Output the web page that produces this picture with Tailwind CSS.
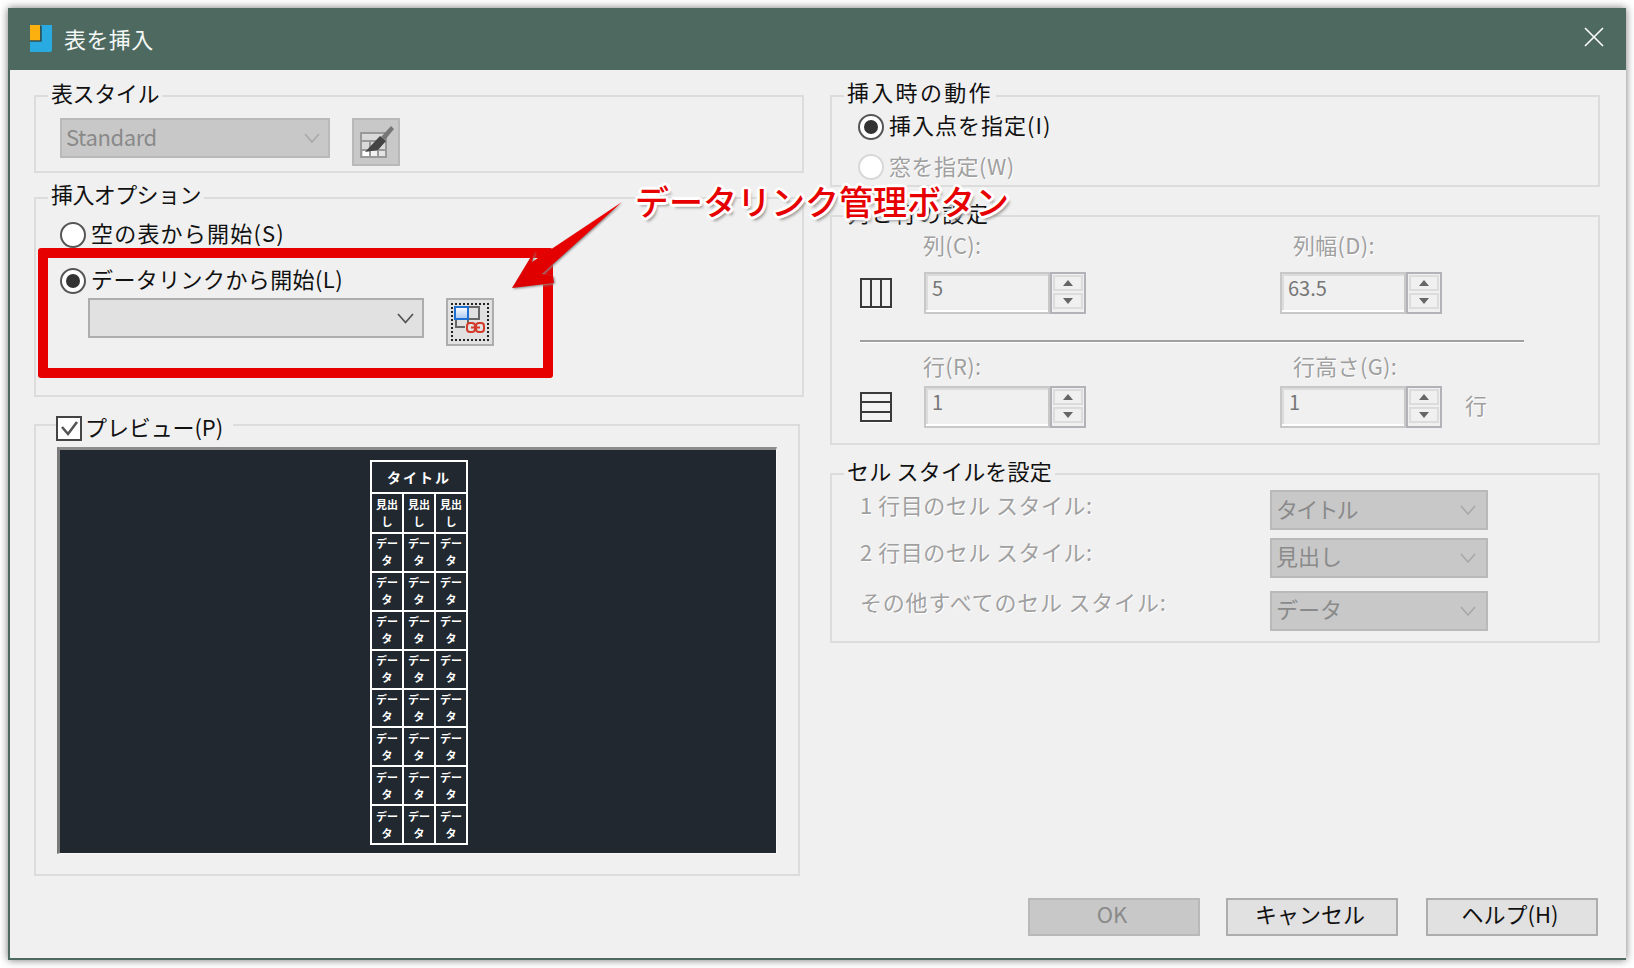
<!DOCTYPE html>
<html lang="ja">
<head>
<meta charset="utf-8">
<title>表を挿入</title>
<script src="https://cdn.jsdelivr.net/npm/@tailwindcss/browser@4"></script>
</head>
<body class="bg-white font-['Noto_Sans_CJK_JP','Liberation_Sans',sans-serif] text-[22px] leading-[28px] text-[#111]">
<div class="w-[1634px] h-[968px] pt-[8px] pl-[8px] overflow-hidden">
  <div class="relative w-[1618px] h-[952px] bg-[#f0f0f0] border-l-2 border-b-2 border-[#4d6960] shadow-[0_0_8px_rgba(0,0,0,0.55)]">

    <!-- title bar -->
    <div class="h-[62px] -ml-[2px] bg-[#4d6960] flex items-center pl-[22px] pr-[22px] text-[#f4f8f6]">
      <svg class="w-[22px] h-[27px] -mt-[2px]" viewBox="0 0 22 27">
        <path d="M11 0h11v25a2 2 0 0 1-2 2H0V16h11z" fill="#29abe2"/>
        <rect x="0" y="0" width="10" height="16" fill="#fbb010"/>
        <path d="M0 16h11V1" fill="none" stroke="#2c4f55" stroke-width="1.5"/>
      </svg>
      <span class="ml-[12px] -mt-[2px] tracking-[0.4px]">表を挿入</span>
      <svg class="ml-auto w-[20px] h-[20px] -mt-[4px]" viewBox="0 0 20 20"><path d="M1 1l18 18M19 1L1 19" stroke="#fff" stroke-width="1.6" fill="none"/></svg>
    </div>

    <div class="flex pl-[24px]">
      <!-- left column -->
      <div class="w-[770px] pt-[25px]">
        <section class="h-[78px] border-2 border-[#dcdcdc]">
          <div class="-mt-[19px] ml-[12px] w-fit px-[3px] bg-[#f0f0f0] tracking-[-0.4px]">表スタイル</div>
          <div class="flex mt-[12px] ml-[24px]">
            <div class="w-[270px] h-[40px] bg-[#c8c8c8] border-2 border-[#b9b9b9] flex items-center pl-[4px] pr-[8px] text-[#8a8a8a] tracking-[-0.4px]">
              <span class="-mt-[4px]">Standard</span>
              <svg class="ml-auto w-[16px] h-[10px]" viewBox="0 0 16 10"><path d="M1 1l7 8 7-8" fill="none" stroke="#a8a8a8" stroke-width="1.6"/></svg>
            </div>
            <div class="ml-[22px] w-[48px] h-[48px] bg-[#c8c8c8] border-2 border-[#b9b9b9]">
              <svg class="w-[44px] h-[44px]" viewBox="0 0 44 44">
                <rect x="7" y="13" width="25" height="24" fill="#d9d9d9" stroke="#999" stroke-width="2"/>
                <path d="M8 30h23M16 22v14M24 22v14M8 21h23" stroke="#999" stroke-width="2"/>
                <rect x="9" y="31" width="6" height="5" fill="#fff"/><rect x="17" y="31" width="6" height="5" fill="#f0f0f0"/><rect x="25" y="31" width="6" height="5" fill="#e4e4e4"/>
                <path d="M37 6l3 3-9 11-4-3z" fill="#777"/>
                <path d="M26 16l6 5-8 9-13 2z" fill="#444"/>
              </svg>
            </div>
          </div>
        </section>

        <section class="mt-[24px] h-[200px] border-2 border-[#dcdcdc]">
          <div class="-mt-[20px] ml-[12px] w-fit px-[3px] bg-[#f0f0f0] tracking-[-0.6px]">挿入オプション</div>
          <div class="flex items-center mt-[15px] ml-[24px] h-[26px]">
            <span class="w-[26px] h-[26px] rounded-full bg-white border-2 border-[#555]"></span>
            <span class="ml-[5px] -mt-[6px] tracking-[1.2px]">空の表から開始(S)</span>
          </div>
          <div class="flex items-center mt-[20px] ml-[24px] h-[26px]">
            <span class="w-[26px] h-[26px] rounded-full bg-white border-2 border-[#555] flex items-center justify-center"><span class="w-[14px] h-[14px] rounded-full bg-[#333]"></span></span>
            <span class="ml-[5px] -mt-[6px] tracking-[0.4px]">データリンクから開始(L)</span>
          </div>
          <div class="flex mt-[4px] ml-[52px]">
            <div class="w-[336px] h-[40px] bg-[#e1e1e1] border-2 border-[#adadad] flex items-center justify-end pr-[8px]">
              <svg class="w-[17px] h-[11px]" viewBox="0 0 17 11"><path d="M1 1l7.500 8.500L16 1" fill="none" stroke="#555" stroke-width="1.8"/></svg>
            </div>
            <div class="ml-[22px] w-[48px] h-[48px] bg-[#e1e1e1] border-2 border-[#adadad] p-[3px]">
              <div class="w-full h-full border-2 border-dotted border-[#222]">
                <svg class="w-[34px] h-[34px]" viewBox="0 0 34 34">
                  <defs><linearGradient id="cell" x1="0" y1="0" x2="0" y2="1"><stop offset="0" stop-color="#fff"/><stop offset="1" stop-color="#a9c8f0"/></linearGradient></defs>
                  <path d="M15 2h11v12H15M3 14v8h9M15 14v4" fill="none" stroke="#666" stroke-width="2"/>
                  <rect x="2" y="2" width="13" height="12" fill="url(#cell)" stroke="#1f6fd0" stroke-width="2"/>
                  <rect x="14" y="18" width="8" height="9" rx="3" fill="none" stroke="#d23a2a" stroke-width="2"/>
                  <rect x="23" y="18" width="8" height="9" rx="3" fill="none" stroke="#d23a2a" stroke-width="2"/>
                  <path d="M18 22.500h9" stroke="#d23a2a" stroke-width="2"/>
                </svg>
              </div>
            </div>
          </div>
        </section>

        <section class="mt-[27px] w-[766px] h-[452px] border-2 border-[#dcdcdc]">
          <div class="-mt-[12px] ml-[20px] w-fit h-[28px] pr-[10px] bg-[#f0f0f0] flex items-center">
            <svg class="w-[26px] h-[25px]" viewBox="0 0 26 25"><rect x="1" y="1" width="24" height="23" fill="#fff" stroke="#444" stroke-width="2"/><path d="M6 11l6 7 9-12" fill="none" stroke="#555" stroke-width="2.600"/></svg>
            <span class="ml-[3px] -mt-[4px] tracking-[-0.1px]">プレビュー(P)</span>
          </div>
          <div class="mt-[5px] ml-[21px] w-[720px] h-[407px] bg-[#212830] border-t-[3px] border-l-[3px] border-t-[#8c8c8c] border-l-[#7a7a7a] border-b border-r border-b-[#fafafa] border-r-[#fafafa] pt-[10px] pl-[310px] text-white">
            <table class="w-[98px] h-[385px] border-collapse table-fixed text-center text-[11px] leading-[17px] font-bold">
              <tr class="h-[32px]"><td colspan="3" class="border-2 border-white text-[14px] tracking-[2px]">タイトル</td></tr>
              <tr class="h-[40px]"><td class="border-2 border-white">見出<br>し</td><td class="border-2 border-white">見出<br>し</td><td class="border-2 border-white">見出<br>し</td></tr>
              <tr><td class="border-2 border-white">デー<br>タ</td><td class="border-2 border-white">デー<br>タ</td><td class="border-2 border-white">デー<br>タ</td></tr>
              <tr><td class="border-2 border-white">デー<br>タ</td><td class="border-2 border-white">デー<br>タ</td><td class="border-2 border-white">デー<br>タ</td></tr>
              <tr><td class="border-2 border-white">デー<br>タ</td><td class="border-2 border-white">デー<br>タ</td><td class="border-2 border-white">デー<br>タ</td></tr>
              <tr><td class="border-2 border-white">デー<br>タ</td><td class="border-2 border-white">デー<br>タ</td><td class="border-2 border-white">デー<br>タ</td></tr>
              <tr><td class="border-2 border-white">デー<br>タ</td><td class="border-2 border-white">デー<br>タ</td><td class="border-2 border-white">デー<br>タ</td></tr>
              <tr><td class="border-2 border-white">デー<br>タ</td><td class="border-2 border-white">デー<br>タ</td><td class="border-2 border-white">デー<br>タ</td></tr>
              <tr><td class="border-2 border-white">デー<br>タ</td><td class="border-2 border-white">デー<br>タ</td><td class="border-2 border-white">デー<br>タ</td></tr>
              <tr><td class="border-2 border-white">デー<br>タ</td><td class="border-2 border-white">デー<br>タ</td><td class="border-2 border-white">デー<br>タ</td></tr>
            </table>
          </div>
        </section>
      </div>

      <!-- right column -->
      <div class="ml-[26px] w-[770px] pt-[25px]">
        <section class="h-[92px] border-2 border-[#dcdcdc]">
          <div class="-mt-[20px] ml-[12px] w-fit px-[3px] bg-[#f0f0f0] tracking-[2.3px]">挿入時の動作</div>
          <div class="flex items-center mt-[9px] ml-[26px] h-[26px]">
            <span class="w-[26px] h-[26px] rounded-full bg-white border-2 border-[#555] flex items-center justify-center"><span class="w-[14px] h-[14px] rounded-full bg-[#333]"></span></span>
            <span class="ml-[5px] -mt-[6px] tracking-[1px]">挿入点を指定(I)</span>
          </div>
          <div class="flex items-center mt-[14px] ml-[26px] h-[26px]">
            <span class="w-[26px] h-[26px] rounded-full bg-white border-2 border-[#d8d8d8]"></span>
            <span class="ml-[5px] -mt-[4px] tracking-[0.5px] text-[#a0a0a0] [text-shadow:1px_1px_0_#fff]">窓を指定(W)</span>
          </div>
        </section>

        <section class="mt-[28px] h-[230px] border-2 border-[#dcdcdc]">
          <div class="-mt-[19px] ml-[12px] w-fit px-[3px] bg-[#f0f0f0] tracking-[1.8px]">列と行の設定</div>
          <div class="flex mt-[4px] pl-[91px] text-[#a0a0a0] [text-shadow:1px_1px_0_#fff] tracking-[0.3px]">
            <span class="w-[370px]">列(C):</span><span>列幅(D):</span>
          </div>
          <div class="flex items-center mt-[14px] pl-[28px]">
            <svg class="w-[32px] h-[31px]" viewBox="0 0 32 31"><rect x="1" y="1" width="30" height="28" fill="#f3f3f3" stroke="#3a3a3a" stroke-width="2"/><path d="M11 1v28M21 1v28" stroke="#3a3a3a" stroke-width="2"/><path d="M0 30.500h32" stroke="#fff"/></svg>
            <div class="ml-[32px] w-[162px] h-[42px] flex">
              <div class="w-[126px] border-2 border-[#c8c8c8] shadow-[inset_0_-2px_0_#fff,inset_2px_2px_0_#dcdcdc] pl-[6px] text-[#777] text-[20px] leading-[28px]">5</div>
              <div class="w-[36px] border-2 border-[#b2b2b8] p-[1px] flex flex-col gap-[2px]">
                <span class="h-[16px] border-2 border-[#dcdcdc] flex items-center justify-center"><svg class="w-[10px] h-[6px]" viewBox="0 0 10 6"><path d="M5 0l5 6H0z" fill="#666"/></svg></span>
                <span class="h-[16px] border-2 border-[#dcdcdc] flex items-center justify-center"><svg class="w-[10px] h-[6px]" viewBox="0 0 10 6"><path d="M5 6l5-6H0z" fill="#666"/></svg></span>
              </div>
            </div>
            <div class="ml-[194px] w-[162px] h-[42px] flex">
              <div class="w-[126px] border-2 border-[#c8c8c8] shadow-[inset_0_-2px_0_#fff,inset_2px_2px_0_#dcdcdc] pl-[6px] text-[#777] text-[20px] leading-[28px]">63.5</div>
              <div class="w-[36px] border-2 border-[#b2b2b8] p-[1px] flex flex-col gap-[2px]">
                <span class="h-[16px] border-2 border-[#dcdcdc] flex items-center justify-center"><svg class="w-[10px] h-[6px]" viewBox="0 0 10 6"><path d="M5 0l5 6H0z" fill="#666"/></svg></span>
                <span class="h-[16px] border-2 border-[#dcdcdc] flex items-center justify-center"><svg class="w-[10px] h-[6px]" viewBox="0 0 10 6"><path d="M5 6l5-6H0z" fill="#666"/></svg></span>
              </div>
            </div>
          </div>
          <div class="mt-[26px] ml-[28px] w-[664px] h-[3px] border-t-2 border-[#a0a0a0] bg-white"></div>
          <div class="flex mt-[8px] pl-[91px] text-[#a0a0a0] [text-shadow:1px_1px_0_#fff] tracking-[0.3px]">
            <span class="w-[370px]">行(R):</span><span>行高さ(G):</span>
          </div>
          <div class="flex items-center mt-[7px] pl-[28px]">
            <svg class="w-[32px] h-[31px]" viewBox="0 0 32 31"><rect x="1" y="1" width="30" height="28" fill="#f3f3f3" stroke="#3a3a3a" stroke-width="2"/><path d="M1 10h30M1 20h30" stroke="#3a3a3a" stroke-width="2"/><path d="M0 30.500h32" stroke="#fff"/></svg>
            <div class="ml-[32px] w-[162px] h-[42px] flex">
              <div class="w-[126px] border-2 border-[#c8c8c8] shadow-[inset_0_-2px_0_#fff,inset_2px_2px_0_#dcdcdc] pl-[6px] text-[#777] text-[20px] leading-[28px]">1</div>
              <div class="w-[36px] border-2 border-[#b2b2b8] p-[1px] flex flex-col gap-[2px]">
                <span class="h-[16px] border-2 border-[#dcdcdc] flex items-center justify-center"><svg class="w-[10px] h-[6px]" viewBox="0 0 10 6"><path d="M5 0l5 6H0z" fill="#666"/></svg></span>
                <span class="h-[16px] border-2 border-[#dcdcdc] flex items-center justify-center"><svg class="w-[10px] h-[6px]" viewBox="0 0 10 6"><path d="M5 6l5-6H0z" fill="#666"/></svg></span>
              </div>
            </div>
            <div class="ml-[194px] w-[162px] h-[42px] flex">
              <div class="w-[126px] border-2 border-[#c8c8c8] shadow-[inset_0_-2px_0_#fff,inset_2px_2px_0_#dcdcdc] pl-[7px] text-[#777] text-[20px] leading-[28px]">1</div>
              <div class="w-[36px] border-2 border-[#b2b2b8] p-[1px] flex flex-col gap-[2px]">
                <span class="h-[16px] border-2 border-[#dcdcdc] flex items-center justify-center"><svg class="w-[10px] h-[6px]" viewBox="0 0 10 6"><path d="M5 0l5 6H0z" fill="#666"/></svg></span>
                <span class="h-[16px] border-2 border-[#dcdcdc] flex items-center justify-center"><svg class="w-[10px] h-[6px]" viewBox="0 0 10 6"><path d="M5 6l5-6H0z" fill="#666"/></svg></span>
              </div>
            </div>
            <span class="ml-[23px] -mt-[6px] text-[#a0a0a0] [text-shadow:1px_1px_0_#fff]">行</span>
          </div>
        </section>

        <section class="mt-[28px] h-[170px] border-2 border-[#dcdcdc]">
          <div class="-mt-[19px] ml-[12px] w-fit px-[3px] bg-[#f0f0f0] tracking-[0.2px]">セル スタイルを設定</div>
          <div class="flex mt-[6px] pl-[28px]">
            <span class="w-[410px] text-[#a0a0a0] [text-shadow:1px_1px_0_#fff] tracking-[0.5px]">1 行目のセル スタイル:</span>
            <div class="w-[218px] h-[40px] bg-[#c8c8c8] border-2 border-[#b9b9b9] flex items-center pl-[4px] pr-[10px] text-[#8a8a8a] tracking-[-1.8px]">
              <span class="-mt-[4px]">タイトル</span>
              <svg class="ml-auto w-[16px] h-[10px]" viewBox="0 0 16 10"><path d="M1 1l7 8 7-8" fill="none" stroke="#a8a8a8" stroke-width="1.6"/></svg>
            </div>
          </div>
          <div class="flex mt-[8px] pl-[28px]">
            <span class="w-[410px] -mt-[1px] text-[#a0a0a0] [text-shadow:1px_1px_0_#fff] tracking-[0.5px]">2 行目のセル スタイル:</span>
            <div class="w-[218px] h-[40px] bg-[#c8c8c8] border-2 border-[#b9b9b9] flex items-center pl-[4px] pr-[10px] text-[#8a8a8a]">
              <span class="-mt-[6px]">見出し</span>
              <svg class="ml-auto w-[16px] h-[10px]" viewBox="0 0 16 10"><path d="M1 1l7 8 7-8" fill="none" stroke="#a8a8a8" stroke-width="1.6"/></svg>
            </div>
          </div>
          <div class="flex mt-[13px] pl-[28px]">
            <span class="w-[410px] -mt-[4px] text-[#a0a0a0] [text-shadow:1px_1px_0_#fff] tracking-[0.8px]">その他すべてのセル スタイル:</span>
            <div class="w-[218px] h-[40px] bg-[#c8c8c8] border-2 border-[#b9b9b9] flex items-center pl-[4px] pr-[10px] text-[#8a8a8a]">
              <span class="-mt-[6px]">データ</span>
              <svg class="ml-auto w-[16px] h-[10px]" viewBox="0 0 16 10"><path d="M1 1l7 8 7-8" fill="none" stroke="#a8a8a8" stroke-width="1.6"/></svg>
            </div>
          </div>
        </section>

        <div class="mt-[255px] pr-[2px] flex justify-end">
          <div class="w-[172px] h-[38px] bg-[#c8c8c8] border-2 border-[#b9b9b9] flex items-center justify-center text-[#8a8a8a]"><span class="-mt-[8px] -ml-[4px]">OK</span></div>
          <div class="ml-[26px] w-[172px] h-[38px] bg-[#e1e1e1] border-2 border-[#adadad] flex items-center justify-center"><span class="-mt-[8px] -ml-[4px]">キャンセル</span></div>
          <div class="ml-[28px] w-[172px] h-[38px] bg-[#e1e1e1] border-2 border-[#adadad] flex items-center justify-center tracking-[0px]"><span class="-mt-[8px] -ml-[4px]">ヘルプ(H)</span></div>
        </div>
      </div>
    </div>

    <!-- annotation over the dialog -->
    <div class="absolute left-[28px] top-[240px] w-[515px] h-[130px] border-[10px] border-[#e60000] rounded-[3px]"></div>
    <svg class="absolute left-[498px] top-[188px] w-[130px] h-[100px] drop-shadow-[1px_1px_1px_#888]" viewBox="0 0 130 100">
      <defs><linearGradient id="arrow" x1="1" y1="0" x2="0" y2="1"><stop offset="0" stop-color="#f00000"/><stop offset="1" stop-color="#dc0000"/></linearGradient></defs>
      <path d="M114 6L34 78l11 2 1 7-42 5 23-38-3 12z" fill="url(#arrow)"/>
    </svg>
    <div class="absolute left-[625px] top-[169px] text-[34px] leading-[48px] font-medium text-[#e60000] whitespace-nowrap [text-shadow:3px_0_0_#fff,-3px_0_0_#fff,0_3px_0_#fff,0_-3px_0_#fff,2px_2px_0_#fff,-2px_2px_0_#fff,2px_-2px_0_#fff,-2px_-2px_0_#fff,3px_4px_3px_#999]">データリンク管理ボタン</div>
  </div>
</div>
</body>
</html>
